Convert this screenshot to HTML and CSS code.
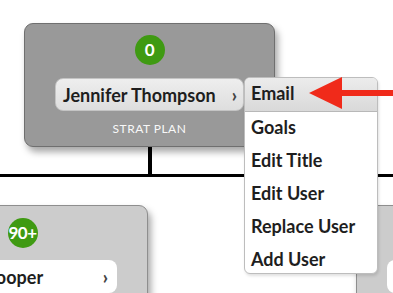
FILE: index.html
```html
<!DOCTYPE html>
<html lang="en">
<head>
  <meta charset="UTF-8">
  <meta name="viewport" content="width=device-width, initial-scale=1.0">
  <title>Org Chart</title>
  <link rel="stylesheet" href="styles.css">
</head>
<body>
  <div class="chart">
    <div class="top-row">
      <div class="node node-active">
        <div class="badge">0</div>
        <div class="name-pill">
          <span class="name">Jennifer Thompson</span>
          <span class="chev">›</span>
        </div>
        <div class="role">STRAT PLAN</div>
      </div>
    </div>
    <div class="stem"></div>
    <div class="rail"></div>
    <div class="children">
      <div class="node node-child node-left">
        <div class="badge">90+</div>
        <div class="name-pill pill-white">
          <span class="name">Sarah Cooper</span>
          <span class="chev">›</span>
        </div>
      </div>
      <div class="node node-child node-right">
        <div class="badge">12</div>
        <div class="name-pill pill-white">
          <span class="name">Mark Ellis</span>
          <span class="chev">›</span>
        </div>
      </div>
    </div>

    <!-- dropdown for the selected user -->
    <ul class="menu">
      <li class="menu-item is-hover">Email</li>
      <li class="menu-item">Goals</li>
      <li class="menu-item">Edit Title</li>
      <li class="menu-item">Edit User</li>
      <li class="menu-item">Replace User</li>
      <li class="menu-item">Add User</li>
    </ul>

    <svg class="arrow" width="86" height="34" viewBox="0 0 86 34">
      <polygon points="1,17 34,1 34,33" fill="#f02a1a"/>
      <rect x="32" y="14" width="54" height="6" fill="#f02a1a"/>
    </svg>
  </div>
</body>
</html>
```

FILE: styles.css
```css
body {
  margin: 0;
  padding: 0;
  background: #fff;
  font-family: 'Lato', 'Open Sans', sans-serif;
  overflow: hidden;
}

.chart {
  position: relative;
  width: 393px;
  height: 293px;
  overflow: hidden;
}

.top-row {
  padding: 23px 0 0 24px;
}

.node {
  box-sizing: border-box;
  width: 251px;
  border-radius: 9px;
  display: flex;
  flex-direction: column;
  align-items: center;
  box-shadow: 3px 5px 7px rgba(0, 0, 0, 0.35);
}

.node-active {
  height: 124px;
  background: #999;
  border: 1px solid #6f6f6f;
  padding-top: 11px;
}

.badge {
  width: 30px;
  height: 30px;
  border-radius: 50%;
  background: #3f9a12;
  color: #fff;
  font-weight: 700;
  font-size: 17px;
  line-height: 30px;
  text-align: center;
  letter-spacing: -0.5px;
}

.name-pill {
  box-sizing: border-box;
  width: 189px;
  height: 33px;
  margin-top: 13px;
  padding: 0 6px 0 7px;
  border-radius: 8px;
  background: linear-gradient(#eeeeee, #dedede);
  border: 1px solid #c4c4c4;
  display: flex;
  align-items: center;
  justify-content: space-between;
}

.name {
  font-size: 18px;
  font-weight: 700;
  color: #1e1e1e;
  white-space: nowrap;
}

.chev {
  font-size: 18px;
  font-weight: 900;
  color: #444;
}

.role {
  margin-top: 10px;
  font-size: 12px;
  color: #f8f8f8;
  letter-spacing: 0.5px;
}

.stem {
  width: 4px;
  height: 27px;
  margin-left: 148px;
  background: #000;
}

.rail {
  height: 3px;
  background: #000;
}

.children {
  display: flex;
  margin-top: 28px;
}

.node-child {
  height: 130px;
  background: #cccccc;
  border: 1px solid #8e8e8e;
  padding-top: 12px;
  flex-shrink: 0;
}

.node-left {
  margin-left: -103px;
}

.node-right {
  margin-left: 208px;
}

.pill-white {
  background: #fff;
  border: none;
  margin-top: 12px;
  padding-right: 9px;
}

.menu {
  position: absolute;
  left: 244px;
  top: 77px;
  box-sizing: border-box;
  width: 134px;
  height: 197px;
  margin: 0;
  padding: 0;
  list-style: none;
  background: #fff;
  border: 1px solid #bdbdbd;
  border-radius: 6px;
  box-shadow: 1px 2px 3px rgba(0, 0, 0, 0.12);
  overflow: hidden;
}

.menu-item {
  height: 33px;
  line-height: 31px;
  padding-left: 6px;
  font-size: 18px;
  font-weight: 700;
  color: #1e1e1e;
  white-space: nowrap;
}

.menu-item.is-hover {
  height: 34px;
  background: linear-gradient(#ececec, #d9d9d9);
  border-bottom: 1px solid #b8b8b8;
  box-sizing: border-box;
}

.arrow {
  position: absolute;
  left: 308px;
  top: 76px;
}
```
